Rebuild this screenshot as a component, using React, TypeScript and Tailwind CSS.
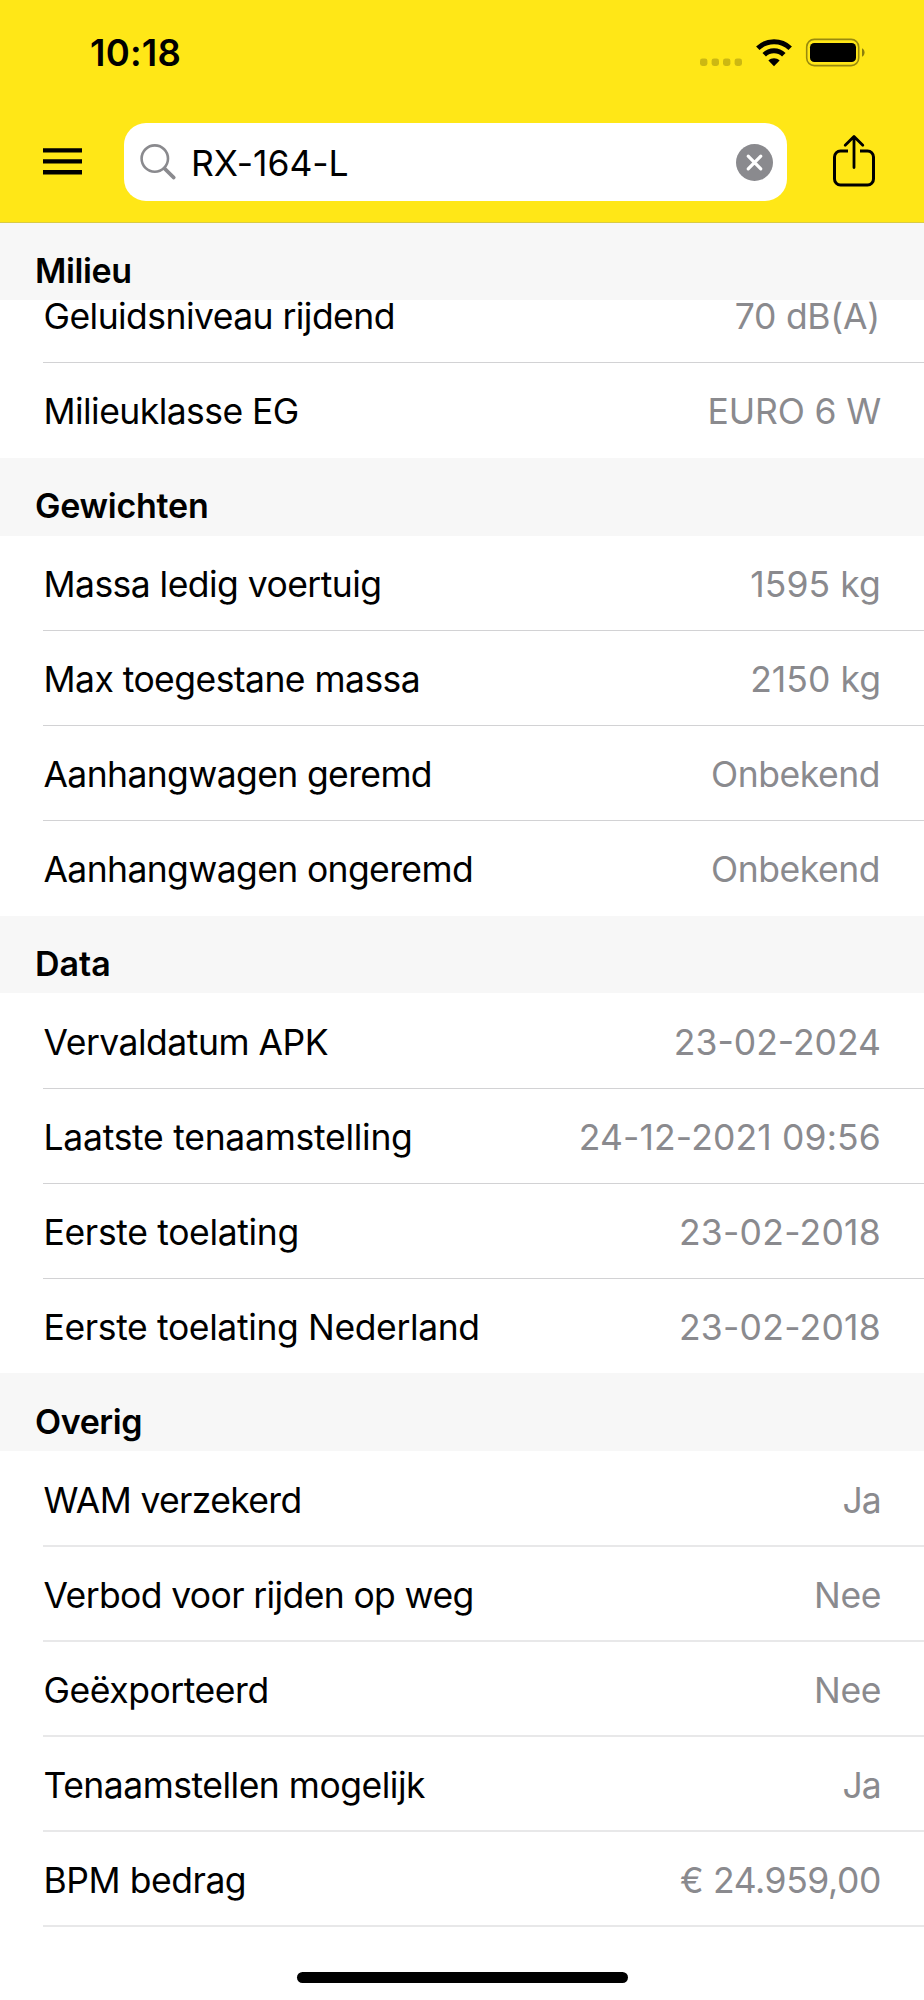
type Item = { label: string; value: string; labelClass: string; valueClass: string }

const milieu: Item[] = [
  { label: "Geluidsniveau rijdend", value: "70 dB(A)", labelClass: "tracking-[-0.55px]", valueClass: "tracking-[-0.25px] pr-px" },
  { label: "Milieuklasse EG", value: "EURO 6 W", labelClass: "tracking-[-0.55px]", valueClass: "tracking-[-0.15px]" },
]

const gewichten: Item[] = [
  { label: "Massa ledig voertuig", value: "1595 kg", labelClass: "tracking-[-0.55px]", valueClass: "tracking-[0.1px]" },
  { label: "Max toegestane massa", value: "2150 kg", labelClass: "tracking-[-0.55px]", valueClass: "tracking-[0.05px]" },
  { label: "Aanhangwagen geremd", value: "Onbekend", labelClass: "tracking-[-0.62px]", valueClass: "tracking-[-0.45px] pr-px" },
  { label: "Aanhangwagen ongeremd", value: "Onbekend", labelClass: "tracking-[-0.62px]", valueClass: "tracking-[-0.45px] pr-px" },
]

const data: Item[] = [
  { label: "Vervaldatum APK", value: "23-02-2024", labelClass: "tracking-[-0.5px]", valueClass: "tracking-[0px]" },
  { label: "Laatste tenaamstelling", value: "24-12-2021 09:56", labelClass: "tracking-[-0.27px]", valueClass: "tracking-[0.15px]" },
  { label: "Eerste toelating", value: "23-02-2018", labelClass: "tracking-[-0.34px]", valueClass: "tracking-[0.25px]" },
  { label: "Eerste toelating Nederland", value: "23-02-2018", labelClass: "tracking-[-0.37px]", valueClass: "tracking-[0.25px]" },
]

const overig: Item[] = [
  { label: "WAM verzekerd", value: "Ja", labelClass: "tracking-[-0.65px]", valueClass: "tracking-[-0.8px]" },
  { label: "Verbod voor rijden op weg", value: "Nee", labelClass: "tracking-[-0.62px]", valueClass: "tracking-[-0.4px]" },
  { label: "Geëxporteerd", value: "Nee", labelClass: "tracking-[-0.45px]", valueClass: "tracking-[-0.4px]" },
  { label: "Tenaamstellen mogelijk", value: "Ja", labelClass: "tracking-[-0.5px]", valueClass: "tracking-[-0.8px]" },
  { label: "BPM bedrag", value: "€ 24.959,00", labelClass: "tracking-[-0.45px]", valueClass: "tracking-[-0.4px]" },
]

function SectionHeader({ title, className }: { title: string; className: string }) {
  return (
    <h2 className={`relative z-10 flex items-end bg-[#f7f7f7] pl-[35px] text-[34px] leading-[40px] font-semibold ${className}`}>
      {title}
    </h2>
  )
}

function Rows({ items, lastLine, lineClass }: { items: Item[]; lastLine?: boolean; lineClass: string }) {
  return (
    <ul>
      {items.map((item, i) => (
        <li key={item.label} className="h-[95px] pl-[43px]">
          <div
            className={`flex h-full items-center justify-between pr-[43px] pl-[0.5px] text-[35.5px] leading-[44px] whitespace-nowrap ${lineClass} ${
              i < items.length - 1 || lastLine ? "" : "border-transparent"
            }`}
          >
            <span className={item.labelClass}>{item.label}</span>
            <span className={`text-[#8a8a8e] ${item.valueClass}`}>{item.value}</span>
          </div>
        </li>
      ))}
    </ul>
  )
}

function StatusBar() {
  return (
    <div className="flex h-[106px] items-center justify-between pr-[59px] pl-[90px]">
      <span className="text-[36.5px] font-semibold tracking-[0.2px]">10:18</span>
      <svg width="166" height="30" viewBox="0 0 166 30">
        <g fill="#000" fillOpacity="0.2">
          <rect x="1" y="20.4" width="7.4" height="7.6" rx="2.4" />
          <rect x="12.6" y="20.4" width="7.4" height="7.6" rx="2.4" />
          <rect x="24" y="20.4" width="7.4" height="7.6" rx="2.4" />
          <rect x="35.6" y="20.4" width="7.4" height="7.6" rx="2.4" />
        </g>
        <g fill="none" stroke="#000" strokeWidth="5">
          <path d="M58.8 10.2a23.5 23.5 0 0 1 32.4 0" />
          <path d="M65.2 16.8a14 14 0 0 1 19.6 0" />
        </g>
        <path d="M75 28.2l-5.6-5.6c3.1-3 8.1-3 11.2 0z" />
        <rect x="107.7" y="1.4" width="52" height="26.2" rx="7.6" fill="none" stroke="#000" strokeOpacity="0.4" strokeWidth="1.6" />
        <rect x="111" y="4.9" width="46" height="19.2" rx="4.4" />
        <path d="M163 10.2v8.6c3.4-1.4 3.4-7.2 0-8.6z" fillOpacity="0.45" />
      </svg>
    </div>
  )
}

function SearchBar() {
  return (
    <div className="flex h-[116px] items-start pr-[49px] pl-[43px]">
      <svg className="mt-[42px]" width="39" height="27" viewBox="0 0 39 27">
        <path d="M0 2.4h39M0 13.4h39M0 24.2h39" stroke="#000" strokeWidth="4.4" />
      </svg>
      <div className="mt-[17px] ml-[42px] flex h-[78px] w-[663px] items-center rounded-[22px] bg-white pr-[14px] pl-[16px]">
        <svg width="37" height="38" viewBox="0 0 37 38" fill="none" stroke="#8a8a8e">
          <circle cx="14.8" cy="15.6" r="13.2" strokeWidth="2.6" />
          <path d="M24.4 25.4l9.4 9.2" strokeWidth="3.6" strokeLinecap="round" />
        </svg>
        <span className="ml-[14px] flex-1 pt-[3px] text-[35.5px] tracking-[-0.05px]">RX-164-L</span>
        <svg width="37" height="37" viewBox="0 0 37 37">
          <circle cx="18.5" cy="18.5" r="18.5" fill="#8a8a8e" />
          <path d="M12.2 12.2l12.6 12.6M24.8 12.2L12.2 24.8" stroke="#fff" strokeWidth="3.2" strokeLinecap="round" />
        </svg>
      </div>
      <svg className="mt-[28px] ml-auto" width="42" height="54" viewBox="0 0 42 54" fill="none" stroke="#000" strokeLinecap="round">
        <path d="M15 17H7.5a6 6 0 0 0-6 6v22a6 6 0 0 0 6 6h27a6 6 0 0 0 6-6V23a6 6 0 0 0-6-6H27" strokeWidth="3" strokeLinecap="butt" />
        <path d="M21 3v30.5M12.2 11.2L21 2.4l8.8 8.8" strokeWidth="2.8" strokeLinejoin="round" />
      </svg>
    </div>
  )
}

export default function App() {
  return (
    <div className="flex h-[2000px] w-[924px] flex-col overflow-hidden bg-white font-['Inter',sans-serif] text-black">
      <header className="h-[223px] border-b border-[#d9cb45] bg-[#ffe717]">
        <StatusBar />
        <SearchBar />
      </header>
      <main className="flex-1">
        <SectionHeader title="Milieu" className="h-[77px] pb-[9px] tracking-[-0.4px]" />
        {/* list is scrolled under the sticky header */}
        <div className="-mt-[32px]">
          <Rows items={milieu} lineClass="border-b border-[#d2d2d4] pt-[4px]" />
        </div>
        <SectionHeader title="Gewichten" className="h-[78px] pb-[10px] tracking-[-0.25px]" />
        <Rows items={gewichten} lineClass="border-b border-[#d2d2d4] pt-[4px]" />
        <SectionHeader title="Data" className="h-[77px] pb-[9px] tracking-[0px]" />
        <div className="-mb-px pt-px">
          <Rows items={data} lineClass="border-b border-[#d2d2d4] pt-[4px]" />
        </div>
        <SectionHeader title="Overig" className="h-[78px] pb-[9px] tracking-[-0.4px]" />
        <div className="pt-px">
          <Rows items={overig} lastLine lineClass="border-b-2 border-[#e8e8e9] pt-[5px]" />
        </div>
      </main>
      <footer className="flex h-[28px] shrink-0 justify-center">
        <div className="h-[11px] w-[331px] rounded-full bg-black" />
      </footer>
    </div>
  )
}
